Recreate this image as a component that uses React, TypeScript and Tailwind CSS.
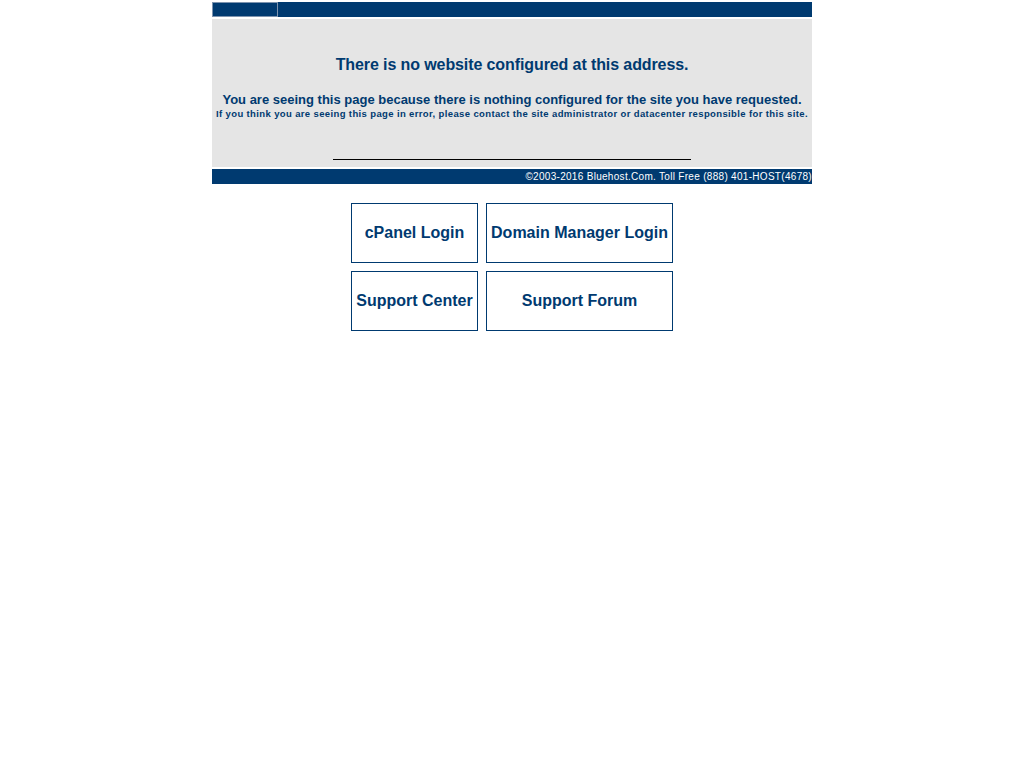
import React from "react";

const navy = "text-[#003a70]";

function Btn({ w, label }: { w: string; label: string }) {
  return (
    <div
      className={`${w} h-[60px] border border-[#003a70] flex items-center justify-center ${navy} font-bold text-[16px] leading-[18px] whitespace-nowrap`}
    >
      {label}
    </div>
  );
}

export default function App() {
  return (
    <div
      className="min-h-[768px] bg-white pt-[2px]"
      style={{ fontFamily: '"Liberation Sans", Arial, Helvetica, sans-serif' }}
    >
      <div className="w-[600px] mx-auto">
        <div className="h-[15px] bg-[#003a70] flex">
          <div className="w-[66px] h-[15px] border border-[#7d93ae] bg-[#003a70]" />
        </div>
        <div className="mt-[2px] h-[148px] bg-[#e5e5e5] flex flex-col items-center pt-[37px]">
          <div className={`${navy} font-bold text-[16px] leading-[18px] tracking-[-0.1px]`}>
            There is no website configured at this address.
          </div>
          <div className={`${navy} font-bold text-[13px] leading-[15px] mt-[18px]`}>
            You are seeing this page because there is nothing configured for the site you have requested.
          </div>
          <div className={`${navy} font-bold text-[9.5px] leading-[12px] mt-[1px] tracking-[0.37px] whitespace-nowrap`}>
            If you think you are seeing this page in error, please contact the site administrator or datacenter responsible for this site.
          </div>
          <div className="mt-[39px] w-[358px] h-px bg-black" />
        </div>
        <div className="mt-[2px] h-[15px] bg-[#003a70] flex items-center justify-end">
          <span className="text-white text-[10px] leading-[15px] tracking-[0.3px]">
            ©2003-2016 Bluehost.Com. Toll Free (888) 401-HOST(4678)
          </span>
        </div>
        <div className="mt-[19px] flex flex-col items-center gap-[8px]">
          <div className="flex gap-[8px]">
            <Btn w="w-[127px]" label="cPanel Login" />
            <Btn w="w-[187px]" label="Domain Manager Login" />
          </div>
          <div className="flex gap-[8px]">
            <Btn w="w-[127px]" label="Support Center" />
            <Btn w="w-[187px]" label="Support Forum" />
          </div>
        </div>
      </div>
    </div>
  );
}
